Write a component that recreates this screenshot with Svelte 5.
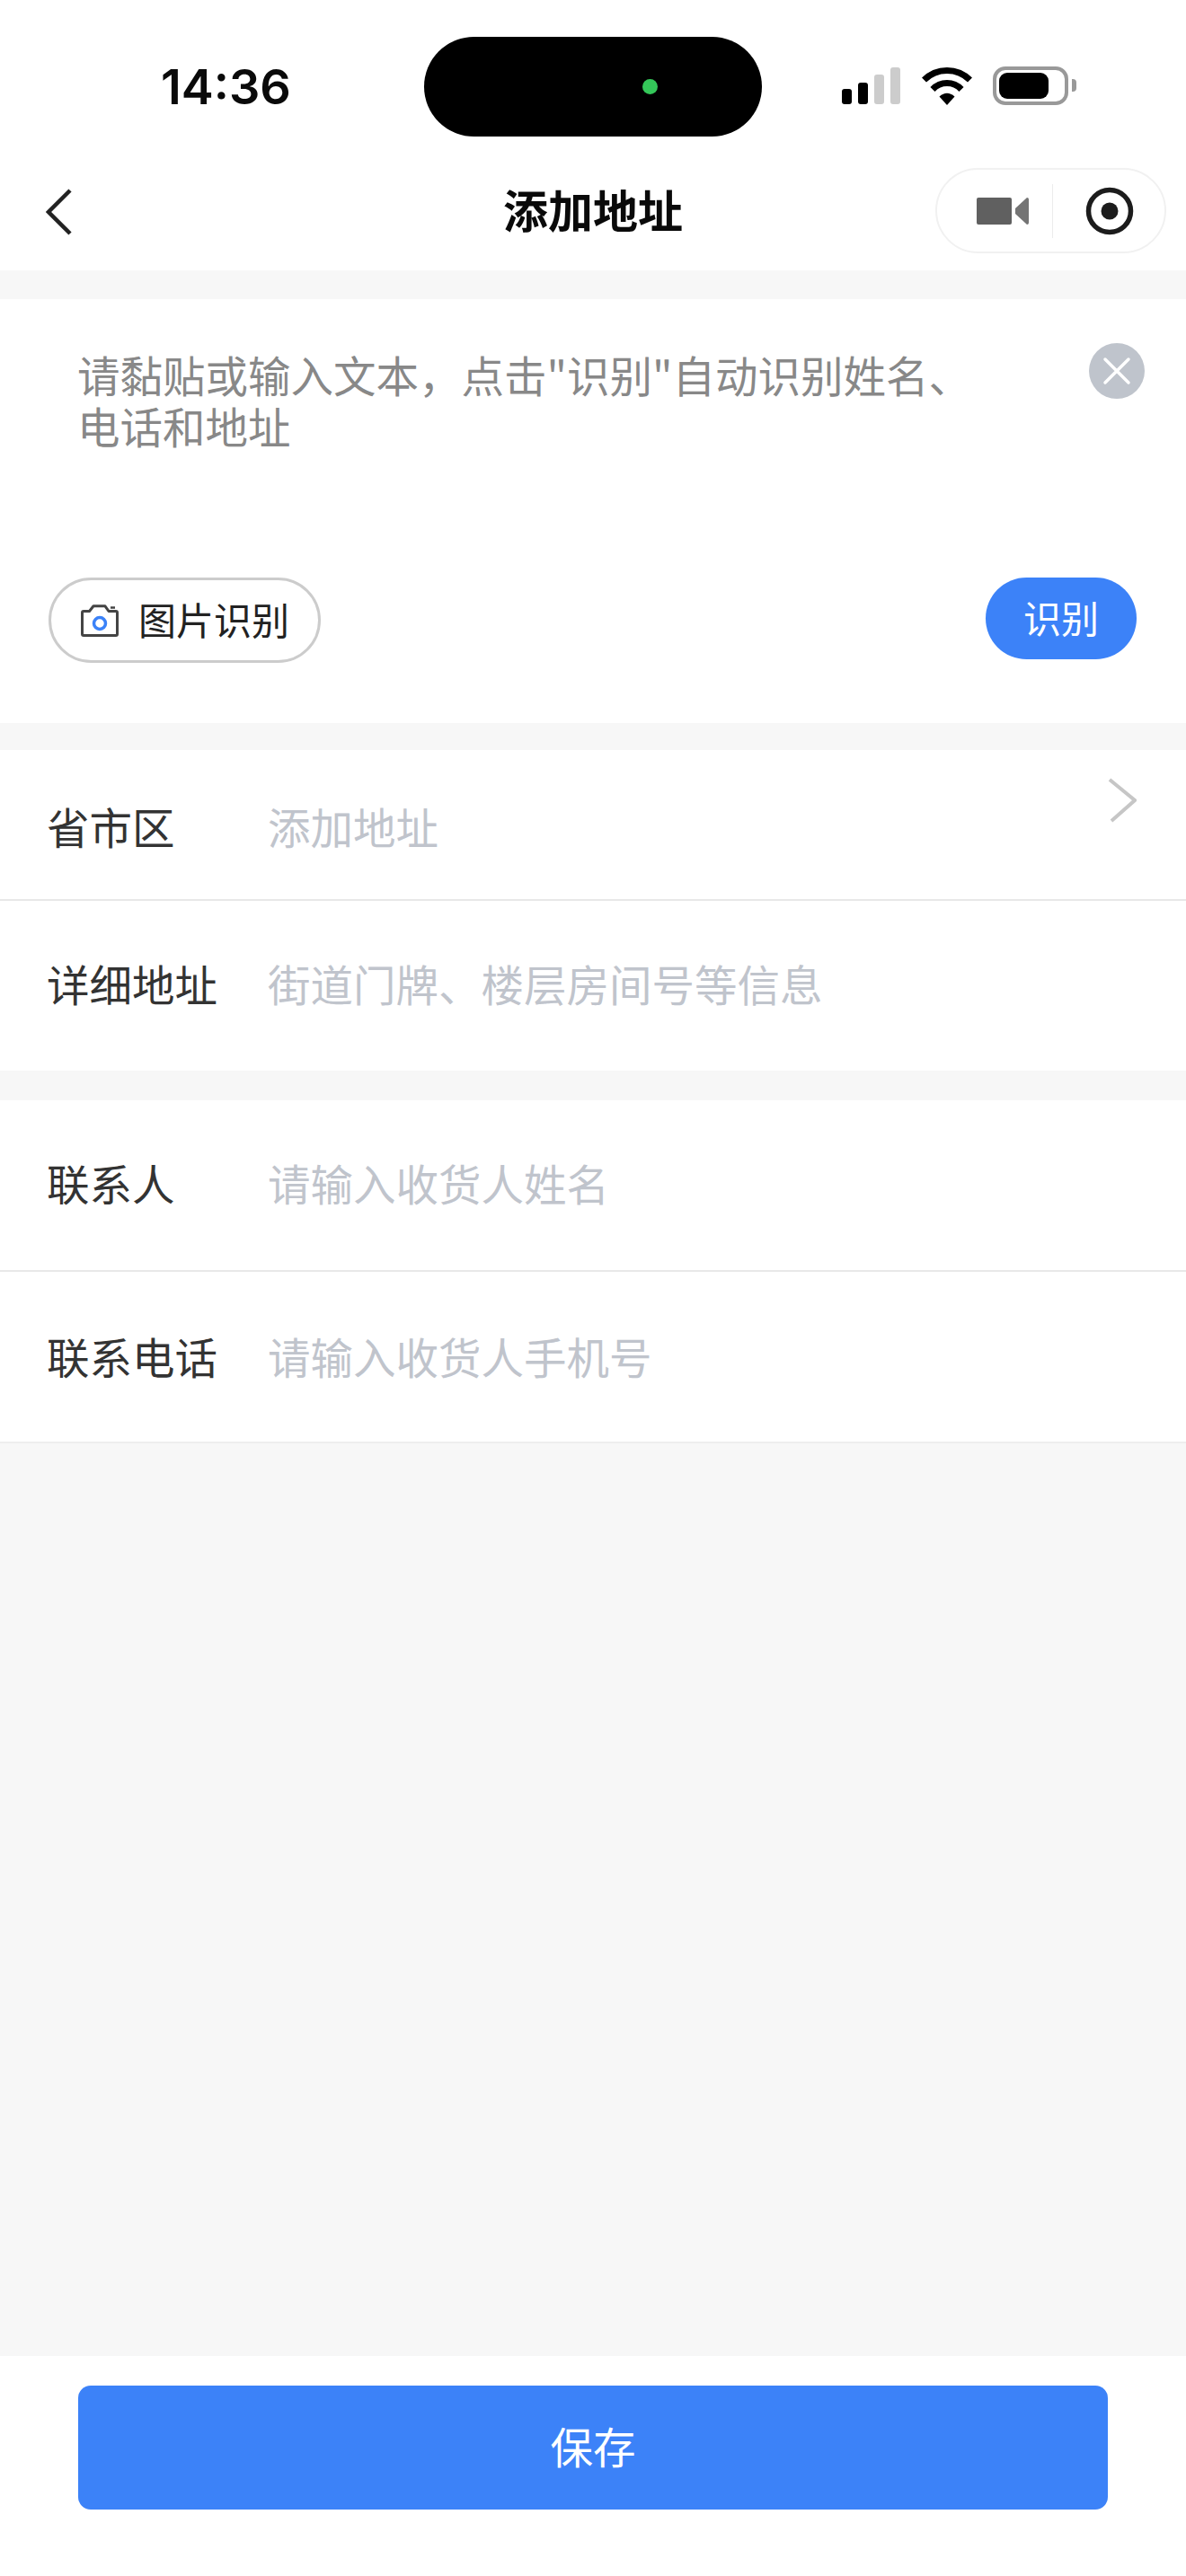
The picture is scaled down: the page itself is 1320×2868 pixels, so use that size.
<script>
  const addressRows = [
    { label: "省市区", hint: "添加地址", cls: "region", chevron: true },
    { label: "详细地址", hint: "街道门牌、楼层房间号等信息", cls: "detail" }
  ];
  const contactRows = [
    { label: "联系人", hint: "请输入收货人姓名", cls: "name" },
    { label: "联系电话", hint: "请输入收货人手机号", cls: "phone" }
  ];
</script>

{#snippet formRow(row)}
  <div class="row {row.cls}">
    <span class="label">{row.label}</span>
    <span class="hint">{row.hint}</span>
    {#if row.chevron}
      <svg class="chevron" width="32" height="50" viewBox="0 0 32 50" fill="none">
        <path d="M2 2 L30 25 L4 48" stroke="#c6c6c6" stroke-width="4" />
      </svg>
    {/if}
  </div>
{/snippet}

<div class="page">
  <header class="top">
    <div class="status">
      <span class="time">14:36</span>
      <div class="island"><i class="dot"></i></div>
      <div class="indicators">
        <div class="signal">
          <i class="on s1"></i><i class="on s2"></i><i class="s3"></i><i class="s4"></i>
        </div>
        <svg class="wifi" width="58" height="43" viewBox="0 0 58 43" fill="none">
          <path d="M3.5 15 A36 36 0 0 1 54.5 15" stroke="#000" stroke-width="7" />
          <path d="M13 25.5 A22 22 0 0 1 45 25.5" stroke="#000" stroke-width="7" />
          <path d="M20.5 33.5 Q29 26 37.5 33.5 L29 43 Z" fill="#000" />
        </svg>
        <div class="battery"><i class="level"></i></div>
        <i class="nub"></i>
      </div>
    </div>
    <nav class="nav">
      <svg class="back" width="30" height="52" viewBox="0 0 30 52" fill="none">
        <path d="M27 2 L3 26 L27 50" stroke="#222" stroke-width="4.5" />
      </svg>
      <h1>添加地址</h1>
      <div class="capsule">
        <svg width="58" height="32" viewBox="0 0 58 32">
          <rect x="0" y="1" width="39" height="30" rx="2" fill="#606060" />
          <path d="M43 13 L56 1 Q58 1 58 3 V29 Q58 31 56 31 L43 19 Z" fill="#747474" />
        </svg>
        <i class="divider"></i>
        <svg width="54" height="54" viewBox="0 0 54 54">
          <circle cx="27" cy="27" r="23.5" fill="none" stroke="#1c1c1c" stroke-width="5.5" />
          <circle cx="27" cy="27" r="9.5" fill="#1c1c1c" />
        </svg>
      </div>
    </nav>
  </header>

  <section class="card paste">
    <div class="paste-top">
      <p class="paste-hint">请黏贴或输入文本，点击"识别"自动识别姓名、电话和地址</p>
      <svg class="clear" width="62" height="62" viewBox="0 0 62 62">
        <circle cx="31" cy="31" r="31" fill="#bfc4cc" />
        <path d="M18 18 L44 44 M44 18 L18 44" stroke="#fff" stroke-width="3.5" stroke-linecap="round" />
      </svg>
    </div>
    <div class="paste-actions">
      <button class="photo">
        <svg width="42" height="36" viewBox="0 0 42 36" fill="none">
          <path d="M9.5 7.5 L14 1.8 H27 L31 7.5 H39 Q40.5 7.5 40.5 9 V33 Q40.5 34.5 39 34.5 H3 Q1.5 34.5 1.5 33 V9 Q1.5 7.5 3 7.5 Z" stroke="#444" stroke-width="3" stroke-linejoin="round" />
          <path d="M33 3.5 H38" stroke="#444" stroke-width="2.5" />
          <circle cx="21" cy="21" r="6.5" stroke="#3b82f8" stroke-width="3.5" />
        </svg>
        <span>图片识别</span>
      </button>
      <button class="recognize">识别</button>
    </div>
  </section>

  <section class="card address">
    {#each addressRows as row}
      {@render formRow(row)}
    {/each}
  </section>

  <section class="card contact">
    {#each contactRows as row}
      {@render formRow(row)}
    {/each}
  </section>

  <div class="filler"></div>

  <footer class="bottom">
    <button class="save">保存</button>
  </footer>
</div>

<style>
  :global(body) {
    margin: 0;
    background: #fff;
    font-family: "Noto Sans CJK SC", "Noto Sans", sans-serif;
  }

  i {
    display: block;
  }

  .page {
    width: 1320px;
    height: 2868px;
    display: flex;
    flex-direction: column;
    overflow: hidden;
    background: #f7f7f7;
  }

  .top {
    height: 301px;
    background: #fff;
    flex: none;
  }

  .status {
    height: 111px;
    padding: 41px 0 18px;
    display: grid;
    grid-template-columns: 472px 376px 1fr;
    align-items: center;
  }

  .time {
    padding-left: 179px;
    font-family: Inter, sans-serif;
    font-size: 54px;
    font-weight: 600;
    color: #0a0a0a;
    line-height: 1;
  }

  .island {
    height: 111px;
    border-radius: 56px;
    background: #000;
    display: flex;
    align-items: center;
    padding-left: 243px;
  }

  .dot {
    width: 17px;
    height: 17px;
    border-radius: 50%;
    background: #34c759;
  }

  .indicators {
    display: flex;
    align-items: flex-end;
    padding-left: 89px;
    height: 43px;
    margin-top: -2px;
  }

  .signal {
    display: flex;
    align-items: flex-end;
    gap: 7px;
    margin-right: 23px;
    margin-bottom: 1px;
  }

  .signal i {
    width: 11px;
    border-radius: 3px;
    background: #ccc;
  }

  .signal .on {
    background: #000;
  }

  .s1 { height: 17px; }
  .s2 { height: 24px; }
  .s3 { height: 33px; }
  .s4 { height: 41px; }

  .battery {
    width: 84px;
    height: 43px;
    margin-left: 22px;
    box-sizing: border-box;
    border: 4px solid #999;
    border-radius: 14px;
    padding: 3px;
  }

  .level {
    width: 55px;
    height: 29px;
    border-radius: 9px;
    background: #000;
  }

  .nub {
    width: 5px;
    height: 14px;
    margin: 0 0 15px 4px;
    border-radius: 0 4px 4px 0;
    background: #999;
  }

  .nav {
    height: 131px;
    padding: 0 22px;
    display: grid;
    grid-template-columns: 1fr auto 1fr;
    align-items: center;
  }

  .back {
    margin-left: 29px;
  }

  h1 {
    margin: 0;
    padding-bottom: 7px;
    font-size: 50px;
    font-weight: 600;
    color: #0a0a0a;
    line-height: 1;
  }

  .capsule {
    justify-self: end;
    width: 257px;
    height: 95px;
    margin-top: -2px;
    box-sizing: border-box;
    border: 2px solid #f1f1f1;
    border-radius: 48px;
    display: flex;
    align-items: center;
    padding-left: 44px;
  }

  .divider {
    width: 1px;
    height: 60px;
    margin: 0 36px 0 26px;
    background: #ececec;
  }

  .card {
    background: #fff;
    flex: none;
  }

  .paste {
    height: 472px;
    margin-top: 32px;
    box-sizing: border-box;
    padding: 48px 55px 0 54px;
  }

  .address {
    margin-top: 30px;
  }

  .contact {
    margin-top: 33px;
  }

  .paste-top {
    display: flex;
    justify-content: space-between;
    height: 262px;
  }

  .paste-hint {
    margin: 0;
    width: 1050px;
    padding: 7px 0 0 32px;
    box-sizing: border-box;
    font-size: 47.5px;
    line-height: 57px;
    color: #888;
  }

  .clear {
    flex: none;
    margin: 1px -9px 0 0;
  }

  .paste-actions {
    display: flex;
    justify-content: space-between;
    align-items: flex-start;
  }

  button {
    font-family: inherit;
    border: none;
    padding: 0;
  }

  .photo {
    width: 303px;
    height: 95px;
    box-sizing: border-box;
    border: 3px solid #ccc;
    border-radius: 48px;
    background: #fff;
    display: flex;
    align-items: center;
    gap: 22px;
    padding: 0 0 0 33px;
    font-size: 42px;
    color: #222;
  }

  .photo span {
    padding-bottom: 4px;
  }

  .recognize {
    width: 168px;
    height: 91px;
    padding-bottom: 5px;
    border-radius: 46px;
    background: #3c82f8;
    color: #fff;
    font-size: 42px;
  }

  .row {
    position: relative;
    box-sizing: border-box;
    display: grid;
    grid-template-columns: 246px 1fr;
    align-items: center;
    padding-left: 52px;
    font-size: 47.5px;
    line-height: 60px;
    border-bottom: 2px solid #e8e8e8;
  }

  .region { height: 168px; padding-top: 9px; padding-bottom: 6px; }
  .detail { height: 189px; padding-bottom: 5px; border-bottom: none; }
  .name { height: 191px; padding-bottom: 5px; }
  .phone { height: 191px; padding-bottom: 2px; border-bottom-color: #eee; }

  .label {
    color: #333;
  }

  .hint {
    color: #c0c4cc;
  }

  .chevron {
    position: absolute;
    right: 55px;
    top: 31px;
  }

  .filler {
    flex: 1;
  }

  .bottom {
    height: 245px;
    box-sizing: border-box;
    padding: 33px 87px 0;
    background: #fff;
    flex: none;
  }

  .save {
    width: 100%;
    height: 138px;
    padding-bottom: 6px;
    border-radius: 14px;
    background: #3c82f8;
    color: #fff;
    font-size: 47.5px;
  }
</style>
